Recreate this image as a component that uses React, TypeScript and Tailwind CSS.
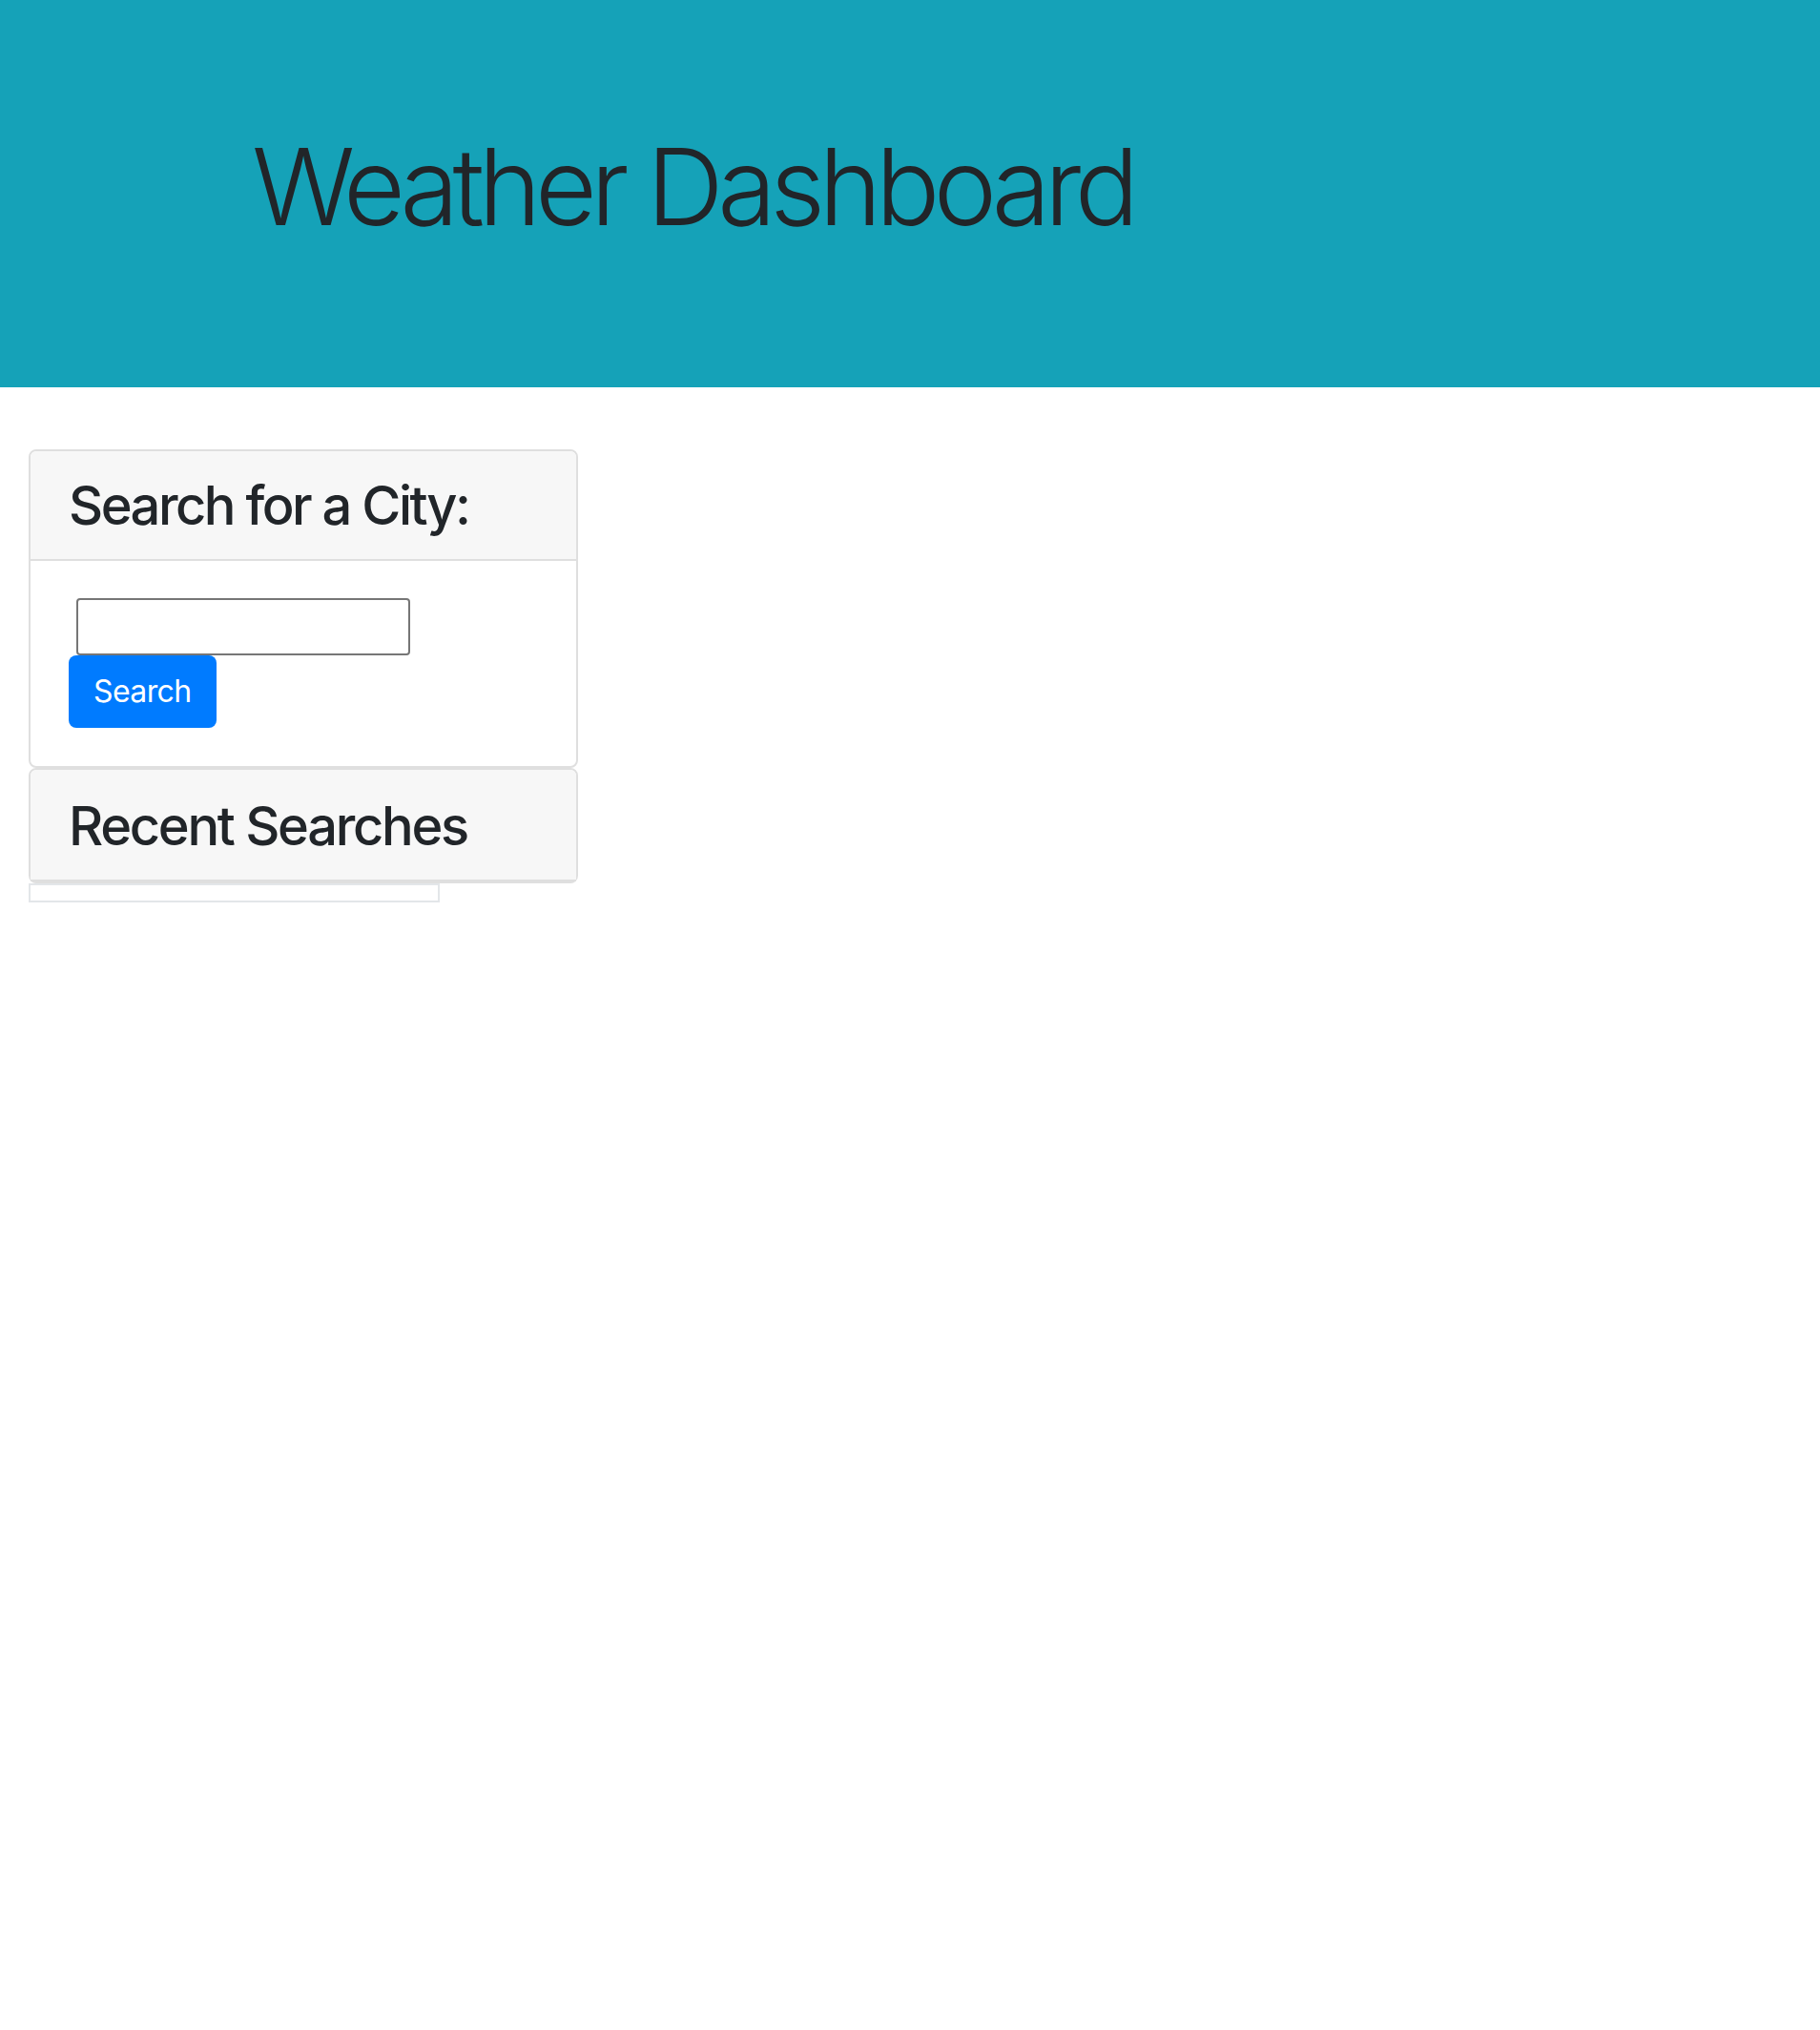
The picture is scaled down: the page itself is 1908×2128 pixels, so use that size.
const App = () => {
  return (
    <div className="min-h-[2128px] bg-white text-[#212529] font-['Inter','Liberation_Sans',sans-serif]">
      <header className="bg-[#15a2b8] pt-[128px] pb-[128px]">
        <div className="mx-auto w-[1440px] px-[30px]">
          <h1 className="mb-[16px] text-[112px] leading-[1.2] font-light tracking-[-6.5px]">
            Weather Dashboard
          </h1>
        </div>
      </header>

      <main className="mt-[65px] px-[30px]">
        <div className="w-[576px]">
          <div className="rounded-[8px] border-2 border-[#dfdfdf]">
            <div className="rounded-t-[6px] border-b-2 border-[#dfdfdf] bg-[#f7f7f7] px-[40px] pt-[24px] pb-[21px]">
              <h3 className="text-[56px] leading-[1.2] font-medium tracking-[-2.5px]">
                Search for a City:
              </h3>
            </div>
            <div className="px-[40px] pt-[39px] pb-[40px]">
              <input
                type="text"
                className="ml-[8px] block h-[60px] w-[350px] rounded-[4px] border-2 border-[#767676] bg-white"
              />
              <button className="block rounded-[8px] bg-[#007bff] px-[26px] py-[14px] text-[32px] leading-[48px] tracking-[-0.6px] text-white">
                Search
              </button>
            </div>
          </div>

          <div className="rounded-[8px] border-2 border-[#dfdfdf]">
            <div className="rounded-t-[6px] border-b-2 border-[#dfdfdf] bg-[#f7f7f7] px-[40px] pt-[26px] pb-[22px]">
              <h3 className="text-[56px] leading-[1.2] font-medium tracking-[-2.3px]">
                Recent Searches
              </h3>
            </div>
          </div>
          <ul className="h-[20px] w-[431px] border-2 border-[#e3e6e9]"></ul>
        </div>
      </main>
    </div>
  );
};

export default App;
